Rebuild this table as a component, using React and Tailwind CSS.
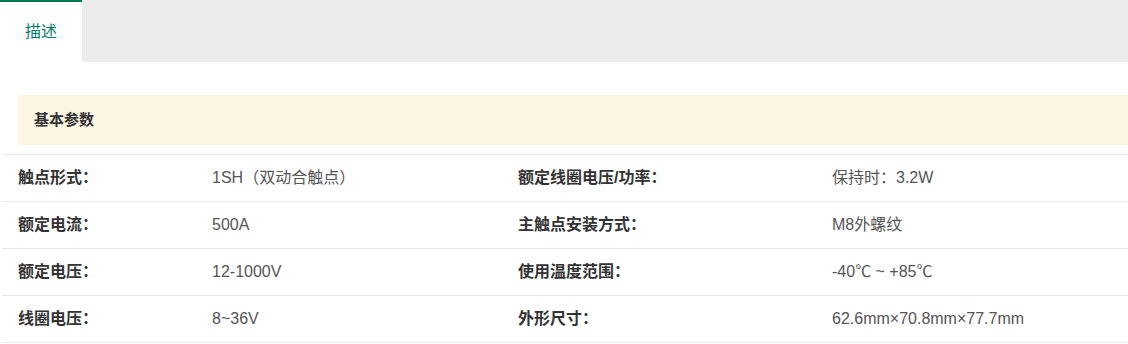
import React from "react"

const rows = [
  ["触点形式：", "1SH（双动合触点）", "额定线圈电压/功率：", "保持时：3.2W"],
  ["额定电流：", "500A", "主触点安装方式：", "M8外螺纹"],
  ["额定电压：", "12-1000V", "使用温度范围：", "-40℃ ~ +85℃"],
  ["线圈电压：", "8~36V", "外形尺寸：", "62.6mm×70.8mm×77.7mm"],
]

export default function App() {
  return (
    <div
      className="w-[1128px] h-[344px] bg-white overflow-hidden"
      style={{ fontFamily: '"Liberation Sans", "Noto Sans CJK SC", sans-serif' }}
    >
      {/* tabs */}
      <div className="flex h-[62px] bg-[#ececec]">
        <div className="w-[82px] bg-white border-t-2 border-[#00784e] flex items-center justify-center text-[16px] text-[#00796b]">
          描述
        </div>
      </div>

      <div className="pt-[33px]">
        <div className="ml-[18px] h-[50px] bg-[#fbf5e2] flex items-center pl-[16px] text-[15px] font-bold text-[#333]">
          基本参数
        </div>

        <div className="mt-[9px] ml-[2px] border-t border-[#e8e8e8]">
          {rows.map((r, i) => (
            <div
              key={i}
              className="grid grid-cols-[210px_306px_314px_1fr] h-[47px] items-center border-b border-[#e8e8e8] text-[16px]"
            >
              <div className="pl-[16px] font-bold text-[#333]">{r[0]}</div>
              <div className="text-[#555]">{r[1]}</div>
              <div className="font-bold text-[#333]">{r[2]}</div>
              <div className="text-[#555]">{r[3]}</div>
            </div>
          ))}
        </div>
      </div>
    </div>
  )
}
